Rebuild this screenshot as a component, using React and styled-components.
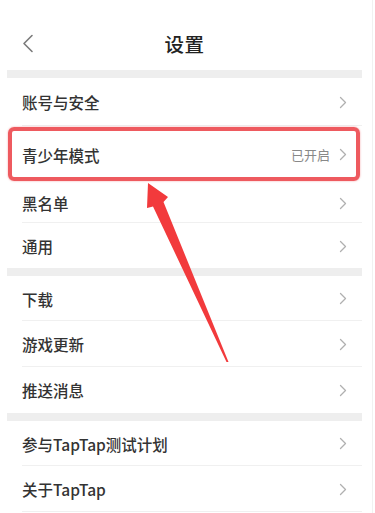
import styled, { createGlobalStyle } from "styled-components";

const GlobalStyle = createGlobalStyle`
  html, body {
    margin: 0;
    padding: 0;
    background: #ffffff;
  }
  body {
    font-family: "Noto Sans CJK SC", "Noto Sans", sans-serif;
    -webkit-font-smoothing: antialiased;
  }
`;

const Screen = styled.div`
  position: relative;
  width: 375px;
  height: 513px;
  overflow: hidden;
  background: #fff;
  box-sizing: border-box;
  padding: 0 13px 0 7px;
`;

const EdgeLine = styled.div`
  position: absolute;
  top: 0;
  bottom: 0;
  right: 2px;
  width: 1px;
  background: #f1f1f1;
`;

const Header = styled.header`
  position: relative;
  height: 70px;
  display: flex;
  align-items: center;
  justify-content: center;
`;

const BackBtn = styled.button`
  position: absolute;
  left: 15px;
  top: 34px;
  border: none;
  background: none;
  padding: 0;
  display: flex;
`;

const Title = styled.h1`
  margin: 0 0 -16px;
  font-size: 19.5px;
  font-weight: 500;
  color: #222;
  letter-spacing: 0.5px;
`;

const GapBar = styled.div`
  height: 8px;
  background: #eeeeee;
`;

const Section = styled.ul`
  list-style: none;
  margin: 0;
  padding: 0;
`;

const Row = styled.li`
  position: relative;
  height: ${(p) => p.$h}px;
  display: flex;
  align-items: center;
  padding: 0 15px;
  ${(p) =>
    p.$line &&
    `
    &::after {
      content: "";
      position: absolute;
      left: 15px;
      right: 0;
      bottom: ${p.$lineAt || 0}px;
      height: 1px;
      background: #f0f0f0;
    }
  `}
  ${(p) =>
    p.$highlight &&
    `
    &::before {
      content: "";
      position: absolute;
      top: 1px;
      bottom: 1px;
      left: 1px;
      right: 2px;
      border: 4px solid #ee5a5f;
      border-radius: 6px;
      box-shadow: 0 0 2px rgba(238, 90, 95, 0.6);
      box-sizing: border-box;
      z-index: 2;
    }
  `}
`;

const Label = styled.span`
  flex: 1;
  font-size: 15.5px;
  color: #333;
  font-weight: 500;
  padding-top: ${(p) => p.$offset || 0}px;
`;

const Extra = styled.span`
  font-size: 13px;
  color: #888;
  margin-right: 9px;
`;

const Arrow = styled.svg`
  position: absolute;
  left: 0;
  top: 0;
  pointer-events: none;
  z-index: 5;
`;

const Chevron = () => (
  <svg width="8" height="13" viewBox="0 0 8 13">
    <polyline
      points="1.5,1.5 6.5,6.5 1.5,11.5"
      fill="none"
      stroke="#b0b0b0"
      strokeWidth="1.3"
      strokeLinecap="round"
      strokeLinejoin="round"
    />
  </svg>
);

const sections = [
  [
    { label: "账号与安全", h: 48, line: true },
    { label: "青少年模式", h: 56, extra: "已开启", highlight: true, offset: 2 },
    { label: "黑名单", h: 42, line: true, lineAt: 1 },
    { label: "通用", h: 44 },
  ],
  [
    { label: "下载", h: 45, line: true },
    { label: "游戏更新", h: 46, line: true },
    { label: "推送消息", h: 46 },
  ],
  [
    { label: "参与TapTap测试计划", h: 45, line: true },
    { label: "关于TapTap", h: 46, line: true },
  ],
];

const App = () => {
  return (
    <>
      <GlobalStyle />
      <Screen>
        <Header>
          <BackBtn>
            <svg width="12" height="19" viewBox="0 0 12 19">
              <polyline
                points="10,1.5 2,9.5 10,17.5"
                fill="none"
                stroke="#7a7a7a"
                strokeWidth="1.6"
                strokeLinecap="round"
                strokeLinejoin="round"
              />
            </svg>
          </BackBtn>
          <Title>设置</Title>
        </Header>
        {sections.map((items, i) => (
          <div key={i}>
            <GapBar />
            <Section>
              {items.map((it) => (
                <Row
                  key={it.label}
                  $h={it.h}
                  $line={it.line}
                  $lineAt={it.lineAt}
                  $highlight={it.highlight}
                >
                  <Label $offset={it.offset}>{it.label}</Label>
                  {it.extra && <Extra>{it.extra}</Extra>}
                  <Chevron />
                </Row>
              ))}
            </Section>
          </div>
        ))}
        <EdgeLine />
        <Arrow width="375" height="513" viewBox="0 0 375 513">
          <polygon
            points="148,183 168,197 163.5,202 228.5,362 226.5,362 153,206.5 147,208"
            fill="#f23a3c"
          />
        </Arrow>
      </Screen>
    </>
  );
};

export default App;
